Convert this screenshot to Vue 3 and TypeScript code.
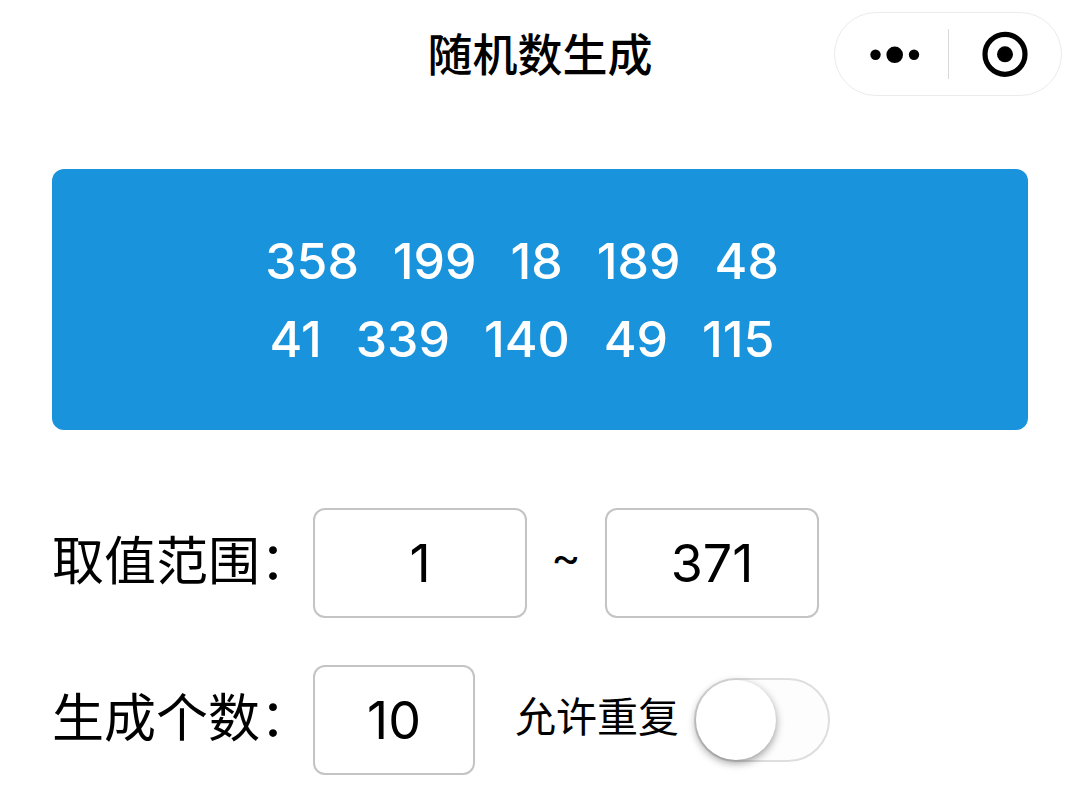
<script setup lang="ts">
import { ref } from 'vue'

const rows: number[][] = [
  [358, 199, 18, 189, 48],
  [41, 339, 140, 49, 115],
]
const min = ref('1')
const max = ref('371')
const count = ref('10')
const allowRepeat = ref(false)
</script>

<template>
  <div class="page">
    <header class="bar">
      <h1 class="title">随机数生成</h1>
      <div class="capsule">
        <button type="button" class="cap-btn" aria-label="更多">
          <svg width="60" height="20" viewBox="0 0 60 20">
            <circle cx="14.5" cy="10.8" r="5.2" />
            <circle cx="33.7" cy="10.8" r="8.3" />
            <circle cx="53" cy="10.8" r="5.2" />
          </svg>
        </button>
        <span class="divider"></span>
        <button type="button" class="cap-btn" aria-label="关闭">
          <svg width="48" height="48" viewBox="0 0 48 48">
            <circle cx="24" cy="24.3" r="20" fill="none" stroke="#000" stroke-width="5.2" />
            <circle cx="24" cy="24.3" r="8" />
          </svg>
        </button>
      </div>
    </header>

    <main class="content">
      <section class="result">
        <p v-for="(row, i) in rows" :key="i" class="row">
          <span v-for="n in row" :key="n">{{ n }}</span>
        </p>
      </section>

      <form class="form" @submit.prevent>
        <div class="field">
          <label class="label" for="min">取值范围：</label>
          <input id="min" v-model="min" class="box" type="text" inputmode="numeric" />
          <span class="tilde">~</span>
          <input id="max" v-model="max" class="box" type="text" inputmode="numeric" aria-label="最大值" />
        </div>
        <div class="field">
          <label class="label" for="count">生成个数：</label>
          <input id="count" v-model="count" class="box small" type="text" inputmode="numeric" />
          <label class="repeat" for="repeat">允许重复</label>
          <input id="repeat" v-model="allowRepeat" class="switch" type="checkbox" role="switch" />
        </div>
      </form>
    </main>
  </div>
</template>

<style>
body {
  margin: 0;
  background: #fff;
}
</style>

<style scoped>
.page {
  font-family: Inter, "Noto Sans CJK SC", sans-serif;
  color: #000;
}
.bar {
  display: grid;
  grid-template-columns: 1fr auto 1fr;
  align-items: center;
  padding: 12px 18px 0;
}
.title {
  grid-column: 2;
  margin: 0;
  padding-top: 4px;
  font-size: 45px;
  line-height: 80px;
  font-weight: 500;
}
.capsule {
  justify-self: end;
  box-sizing: border-box;
  width: 228px;
  height: 84px;
  border: 1px solid #ebebeb;
  border-radius: 42px;
  display: flex;
  align-items: center;
}
.cap-btn {
  flex: 1;
  height: 100%;
  padding: 0;
  border: 0;
  background: none;
  display: flex;
  align-items: center;
  justify-content: center;
}
.divider {
  width: 1px;
  height: 50px;
  background: #d8d8d8;
}
.content {
  padding: 73px 52px 0;
}
.result {
  box-sizing: border-box;
  padding: 53px 36px 52px 0;
  border-radius: 12px;
  background: #1a93dd;
  color: #fff;
}
.row {
  margin: 0;
  display: flex;
  justify-content: center;
  gap: 34px;
  font-size: 50px;
  line-height: 78px;
  font-weight: 500;
}
.form {
  padding-top: 78px;
  display: flex;
  flex-direction: column;
  gap: 47px;
}
.field {
  display: flex;
  align-items: center;
}
.label {
  width: 261px;
  padding-bottom: 2px;
  font-size: 52px;
  line-height: 78px;
  white-space: nowrap;
}
.box {
  box-sizing: border-box;
  width: 214px;
  height: 110px;
  padding: 0;
  border: 2px solid #c4c4c4;
  border-radius: 12px;
  background: #fff;
  color: #000;
  font: inherit;
  font-size: 52px;
  text-align: center;
  outline: none;
}
.small {
  width: 162px;
}
.tilde {
  width: 78px;
  padding-bottom: 14px;
  text-align: center;
  font-size: 45px;
}
.repeat {
  margin-left: 40px;
  padding-bottom: 6px;
  font-size: 41px;
  line-height: 62px;
}
.switch {
  appearance: none;
  box-sizing: border-box;
  width: 136px;
  height: 84px;
  margin: 0 0 0 15px;
  border: 2px solid #dedede;
  border-radius: 42px;
  background: #fdfdfd;
}
.switch::before {
  content: "";
  display: block;
  width: 80px;
  height: 80px;
  border-radius: 50%;
  background: #fff;
  box-shadow: 0 3px 8px rgba(0, 0, 0, 0.4);
}
.switch:checked {
  background: #1a93dd;
}
.switch:checked::before {
  margin-left: auto;
}
</style>
